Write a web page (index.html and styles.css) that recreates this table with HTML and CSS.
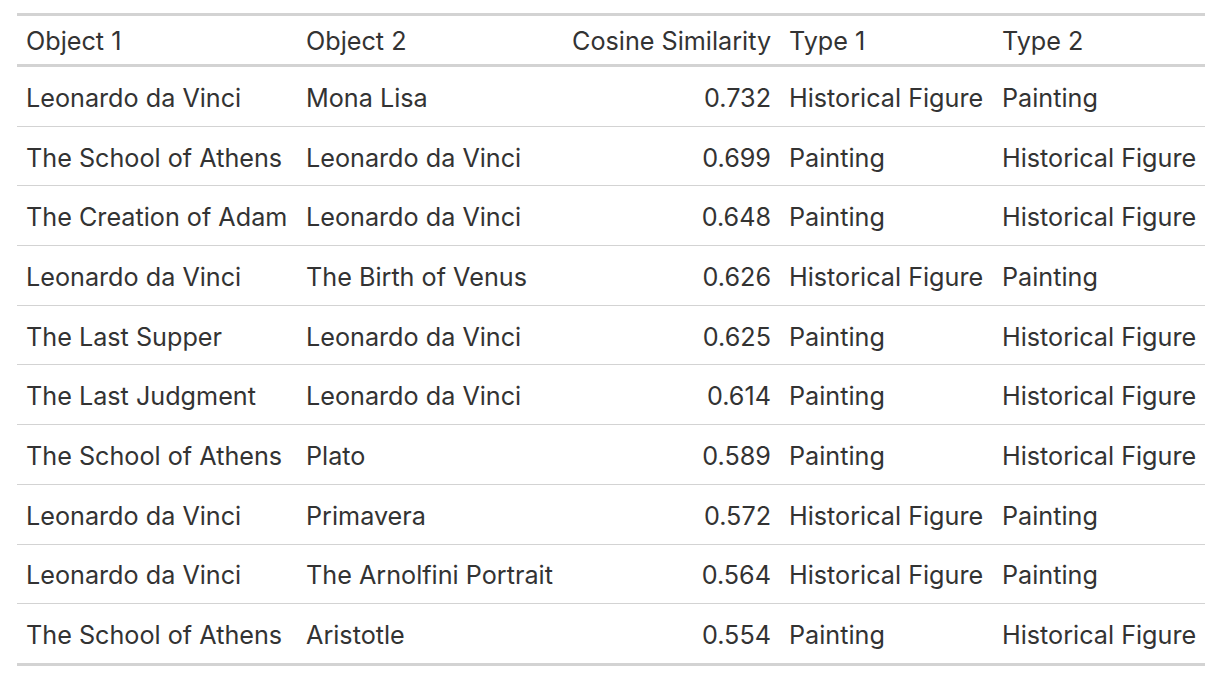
FILE: index.html
```html
<!DOCTYPE html>
<html>
<head>
<meta charset="utf-8">
<link rel="stylesheet" href="styles.css">
</head>
<body>
<table class="gt">
  <colgroup>
    <col class="c1"><col class="c2"><col class="c3"><col class="c4"><col class="c5">
  </colgroup>
  <thead>
    <tr><th>Object 1</th><th>Object 2</th><th class="num">Cosine Similarity</th><th>Type 1</th><th>Type 2</th></tr>
  </thead>
  <tbody>
    <tr><td>Leonardo da Vinci</td><td>Mona Lisa</td><td class="num">0.732</td><td>Historical Figure</td><td>Painting</td></tr>
    <tr><td>The School of Athens</td><td>Leonardo da Vinci</td><td class="num">0.699</td><td>Painting</td><td>Historical Figure</td></tr>
    <tr><td>The Creation of Adam</td><td>Leonardo da Vinci</td><td class="num">0.648</td><td>Painting</td><td>Historical Figure</td></tr>
    <tr><td>Leonardo da Vinci</td><td>The Birth of Venus</td><td class="num">0.626</td><td>Historical Figure</td><td>Painting</td></tr>
    <tr><td>The Last Supper</td><td>Leonardo da Vinci</td><td class="num">0.625</td><td>Painting</td><td>Historical Figure</td></tr>
    <tr><td>The Last Judgment</td><td>Leonardo da Vinci</td><td class="num">0.614</td><td>Painting</td><td>Historical Figure</td></tr>
    <tr><td>The School of Athens</td><td>Plato</td><td class="num">0.589</td><td>Painting</td><td>Historical Figure</td></tr>
    <tr><td>Leonardo da Vinci</td><td>Primavera</td><td class="num">0.572</td><td>Historical Figure</td><td>Painting</td></tr>
    <tr><td>Leonardo da Vinci</td><td>The Arnolfini Portrait</td><td class="num">0.564</td><td>Historical Figure</td><td>Painting</td></tr>
    <tr><td>The School of Athens</td><td>Aristotle</td><td class="num">0.554</td><td>Painting</td><td>Historical Figure</td></tr>
  </tbody>
</table>
</body>
</html>
```
FILE: styles.css
```css
html, body {
  margin: 0;
  background: #ffffff;
}
body {
  padding: 13px 19px 0 17px;
  font-family: Inter, "Noto Sans", sans-serif;
  color: #333333;
}
.gt {
  width: 1188px;
  table-layout: fixed;
  border-collapse: collapse;
  border-top: 3px solid #d3d3d3;
  border-bottom: 3px solid #d3d3d3;
  font-size: 25.2px;
}
.c1 { width: 280px; }
.c2 { width: 266px; }
.c3 { width: 217px; }
.c4 { width: 213px; }
.c5 { width: 212px; }
.gt th {
  font-weight: 400;
  text-align: left;
  height: 46px;
  padding: 2px 9px 0;
  border-bottom: 3px solid #d3d3d3;
  white-space: nowrap;
}
.gt td {
  height: 55.7px;
  padding: 3px 9px 0;
  border-top: 1px solid #d3d3d3;
  white-space: nowrap;
}
.gt tbody tr:first-child td { border-top: none; }
.gt .num { text-align: right; }
```
